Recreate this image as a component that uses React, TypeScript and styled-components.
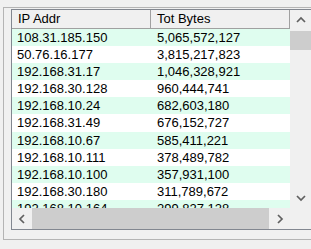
import React from 'react';
import styled, { createGlobalStyle } from 'styled-components';

const GlobalStyle = createGlobalStyle`
  html, body {
    margin: 0;
    padding: 0;
    background: #f0f0f0;
    overflow: hidden;
  }
  body {
    font-family: "Liberation Sans", Arial, sans-serif;
    font-size: 13px;
    color: #000000;
  }
`;

interface Row {
  readonly ip: string;
  readonly bytes: string;
}

const rows: Row[] = [
  { ip: '108.31.185.150', bytes: '5,065,572,127' },
  { ip: '50.76.16.177', bytes: '3,815,217,823' },
  { ip: '192.168.31.17', bytes: '1,046,328,921' },
  { ip: '192.168.30.128', bytes: '960,444,741' },
  { ip: '192.168.10.24', bytes: '682,603,180' },
  { ip: '192.168.31.49', bytes: '676,152,727' },
  { ip: '192.168.10.67', bytes: '585,411,221' },
  { ip: '192.168.10.111', bytes: '378,489,782' },
  { ip: '192.168.10.100', bytes: '357,931,100' },
  { ip: '192.168.30.180', bytes: '311,789,672' },
  { ip: '192.168.10.164', bytes: '299,827,128' },
];

const Frame = styled.div`
  box-sizing: border-box;
  margin: 7px 0 0 3px;
  width: 400px;
  height: 233px;
  padding: 1px 0 0 7px;
  border: 1px solid #b4b4b4;
  border-right: none;
`;

const ListBox = styled.div`
  box-sizing: border-box;
  width: 301px;
  height: 221px;
  border: 1px solid #828790;
  background: #ffffff;
  display: grid;
  grid-template-columns: 278px 21px;
  grid-template-rows: 198px 21px;
`;

const Content = styled.div`
  overflow: hidden;
  background: #ffffff;
`;

const Columns = styled.div`
  display: grid;
  grid-template-columns: 139px 139px;
`;

const HeaderCell = styled.div`
  box-sizing: border-box;
  height: 19px;
  line-height: 18px;
  padding-left: 6px;
  background: #f0f0f0;
  border-right: 1px solid #a0a0a0;
  border-bottom: 1px solid #a0a0a0;
  white-space: nowrap;
`;

const DataRow = styled.div<{ $alt: boolean }>`
  display: grid;
  grid-template-columns: 139px 139px;
  height: 17.1px;
  line-height: 17px;
  background: ${p => (p.$alt ? '#dffdef' : '#ffffff')};
`;

const Cell = styled.div<{ $pad: number }>`
  padding-left: ${p => p.$pad}px;
  white-space: nowrap;
`;

const VScroll = styled.div`
  display: flex;
  flex-direction: column;
  background: #f0f0f0;
`;

const HScroll = styled.div`
  display: flex;
  background: #f0f0f0;
`;

const ArrowButton = styled.div<{ $size: number }>`
  flex: 0 0 ${p => p.$size}px;
  display: flex;
  align-items: center;
  justify-content: center;
`;

const Track = styled.div<{ $vertical?: boolean }>`
  flex: 1;
  display: flex;
  flex-direction: ${p => (p.$vertical ? 'column' : 'row')};
`;

const VThumb = styled.div`
  margin-top: 1px;
  height: 19px;
  background: #cdcdcd;
`;

const HThumb = styled.div`
  flex: 0 0 237px;
  background: #cdcdcd;
`;

const Corner = styled.div`
  background: #f0f0f0;
`;

const Chevron: React.FC<{ dir: 'up' | 'down' | 'left' | 'right' }> = ({ dir }) => {
  const points = {
    up: '1,6 5,2 9,6',
    down: '1,2 5,6 9,2',
    left: '6,1 2,5 6,9',
    right: '2,1 6,5 2,9',
  }[dir];
  const vertical = dir === 'up' || dir === 'down';
  return (
    <svg width={vertical ? 10 : 8} height={vertical ? 8 : 10} viewBox={vertical ? '0 0 10 8' : '0 0 8 10'}>
      <polyline points={points} fill="none" stroke="#606060" strokeWidth="1.7" />
    </svg>
  );
};

export default function App() {
  return (
    <>
      <GlobalStyle />
      <Frame>
        <ListBox>
          <Content>
            <Columns>
              <HeaderCell>IP Addr</HeaderCell>
              <HeaderCell>Tot Bytes</HeaderCell>
            </Columns>
            {rows.map((r, i) => (
              <DataRow key={r.ip} $alt={i % 2 === 0}>
                <Cell $pad={5}>{r.ip}</Cell>
                <Cell $pad={6}>{r.bytes}</Cell>
              </DataRow>
            ))}
          </Content>
          <VScroll>
            <ArrowButton $size={20}>
              <Chevron dir="up" />
            </ArrowButton>
            <Track $vertical>
              <VThumb />
            </Track>
            <ArrowButton $size={20}>
              <Chevron dir="down" />
            </ArrowButton>
          </VScroll>
          <HScroll>
            <ArrowButton $size={20}>
              <Chevron dir="left" />
            </ArrowButton>
            <Track>
              <HThumb />
            </Track>
            <ArrowButton $size={21}>
              <Chevron dir="right" />
            </ArrowButton>
          </HScroll>
          <Corner />
        </ListBox>
      </Frame>
    </>
  );
}
